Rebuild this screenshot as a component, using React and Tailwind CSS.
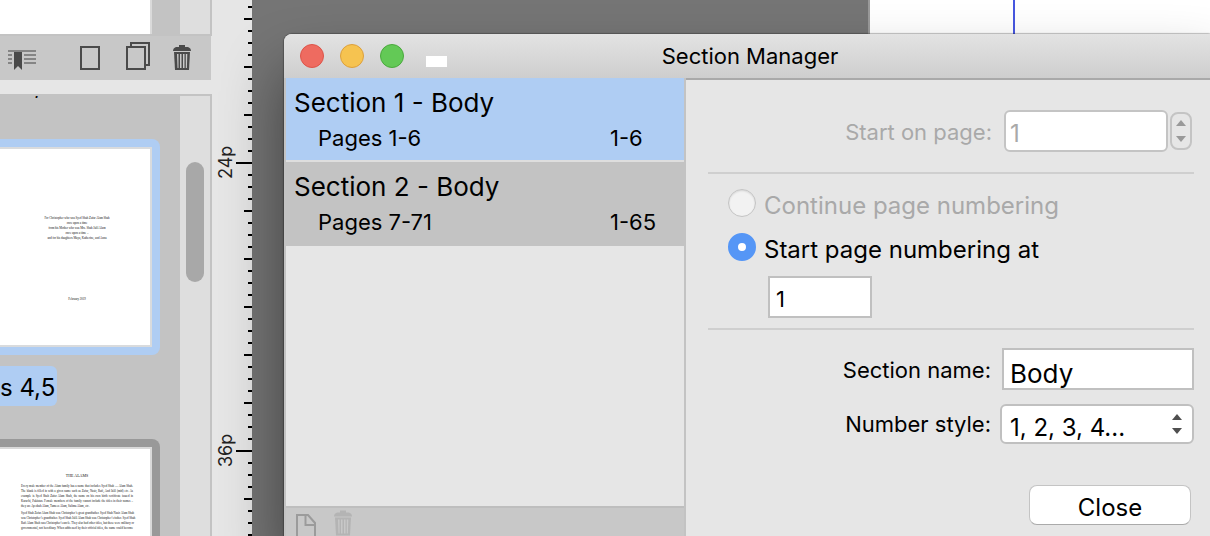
import React, { useState } from 'react';

const sections = [
  { id: 1, title: 'Section 1 - Body', pages: 'Pages 1-6', range: '1-6' },
  { id: 2, title: 'Section 2 - Body', pages: 'Pages 7-71', range: '1-65' },
];

const dedication = [
  'For Christopher who was Syed Shah Zafar Alam Shah',
  'once upon a time',
  'from his Mother who was Mrs. Shah Jalil Alam',
  'once upon a time –',
  'and for his daughters Maya, Katherine, and Anna',
];

const alamsText = [
  [
    'Every male member of the Alam family has a name that includes Syed Shah — Alam Shah.',
    'The blank is filled in with a given name such as Zafar, Nasir, Rafi, And Jalil (mid) etc. As',
    'example is Syed Shah Zafar Alam Shah, the name on his own birth certificate issued in',
    'Karachi, Pakistan. Female members of the family cannot include the titles in their names –',
    'they are Ayeshah Alam, Tameez Alam, Salima Alam, etc.',
  ],
  [
    'Syed Shah Zafar Alam Shah was Christopher’s great grandfather. Syed Shah Nasir Alam Shah',
    'was Christopher’s grandfather. Syed Shah Jalil Alam Shah was Christopher’s father. Syed Shah',
    'Rafi Alam Shah was Christopher’s uncle. They also had other titles, but these were military or',
    'governmental, not hereditary. When addressed by their official titles, the name could become',
  ],
];

const ticks = Array.from({ length: 45 }, (_, i) => 7 + i * 12);

const tickLength = (y) => {
  if ((y - 163) % 288 === 0) return 16;
  if ((y - 19) % 48 === 0) return 8;
  return 4;
};

const TrashIcon = ({ className, hole }) => (
  <svg viewBox="0 0 18 25" className={className} aria-hidden="true">
    <path d="M6 0h6v2h3q3 1 3 4H0q0-3 3-4h3z" fill="currentColor" />
    <path d="M1 7h16l-1 18H2z" fill="currentColor" />
    <path d="M4 9h1.500v14H4.500zM7 9h1.500v14H7zM10 9h1.500v14H10zM12.800 9h1.500l-.4 14h-1.100z" fill={hole} />
  </svg>
);

const ArrowUp = ({ className }) => (
  <svg viewBox="0 0 10 6" className={className} aria-hidden="true">
    <path d="M5 0l5 6H0z" fill="currentColor" />
  </svg>
);

const ArrowDown = ({ className }) => (
  <svg viewBox="0 0 10 6" className={className} aria-hidden="true">
    <path d="M0 0h10L5 6z" fill="currentColor" />
  </svg>
);

const PagesToolbar = () => (
  <div className="mr-px flex h-11 items-end bg-[#c8c8c8] pb-2.5 pl-2 text-[#4a4a4a]">
    <button type="button" aria-label="Sections">
      <svg viewBox="0 0 28 20" className="block h-5 w-7">
        <path d="M0 1h28M0 5h4M16 5h12M0 9h4M16 9h12M0 13h4M16 13h12" stroke="#858585" strokeWidth="2" />
        <path d="M6 2h8v18l-4-4-4 4z" fill="currentColor" />
      </svg>
    </button>
    <button type="button" aria-label="Add page" className="ml-11">
      <svg viewBox="0 0 20 24" className="block h-6 w-5">
        <rect x="1" y="1" width="18" height="22" fill="none" stroke="currentColor" strokeWidth="2" />
      </svg>
    </button>
    <button type="button" aria-label="Duplicate page" className="ml-[26px]">
      <svg viewBox="0 0 24 28" className="block h-7 w-6">
        <rect x="1" y="5" width="18" height="22" fill="none" stroke="currentColor" strokeWidth="2" />
        <path d="M5 4V1h18v22h-3" fill="none" stroke="currentColor" strokeWidth="2" />
      </svg>
    </button>
    <button type="button" aria-label="Delete page" className="ml-[23px]">
      <TrashIcon className="block h-[25px] w-[18px]" hole="#c8c8c8" />
    </button>
  </div>
);

const PagesPanel = () => (
  <aside className="flex w-[212px] shrink-0 flex-col bg-[#e6e6e6]">
    <div className="flex h-9 shrink-0 border-r-2 border-b-2 border-[#c3c3c3] bg-[#c3c3c3]">
      <div className="w-[152px] border-r-2 border-[#dadada] bg-white" />
      <div className="ml-auto w-[30px] bg-[#dedede]" />
    </div>
    <PagesToolbar />
    <div className="mt-3.5 flex min-h-0 flex-1 border-t-2 border-r-2 border-[#c3c3c3] bg-[#c3c3c3]">
      <div className="min-w-0 flex-1 overflow-hidden pr-5">
        {/* label of the spread scrolled out above */}
        <div className="flex h-2.5 items-end overflow-hidden">
          <span className="text-2xl leading-10">s 2,3</span>
        </div>
        <div className="mt-[33px] rounded-r-lg bg-[#afcdf3] py-2 pr-2">
          <div className="flex h-[200px] flex-col border-y-2 border-r-2 border-[#d9dbdd] bg-white pt-[67px] pl-1 text-center font-['Liberation_Serif'] text-[3px] leading-[5px] text-[#111]">
            {dedication.map((line, i) => (
              <p key={i}>{line}</p>
            ))}
            <p className="mt-14">February 2019</p>
          </div>
        </div>
        <div className="mt-[11px] h-10 w-[57px] rounded-r-md bg-[#afcdf3] pt-0.5">
          <span className="block text-2xl leading-10 whitespace-nowrap">s 4,5</span>
        </div>
        <div className="mt-[33px] rounded-tr-lg bg-[#999] pt-2 pr-2">
          <div className="h-24 border-t-2 border-r-2 border-[#d9d9d9] bg-white pt-6 pr-[17px] pl-[21px] font-['Liberation_Serif'] text-[3px] leading-[5px] text-[#111]">
            <p className="text-center text-[4px]">THE ALAMS</p>
            {alamsText.map((lines, i) => (
              <div key={i} className={i === 0 ? 'mt-1.5' : 'mt-0.5'}>
                {lines.map((line, j) => (
                  <p
                    key={j}
                    className={i === 0 && j === 4 ? 'whitespace-nowrap' : 'whitespace-nowrap [text-align-last:justify]'}
                  >
                    {line}
                  </p>
                ))}
              </div>
            ))}
          </div>
        </div>
      </div>
      <div className="flex w-[30px] justify-center bg-[#dedede] pt-[66px]">
        <div className="h-[120px] w-[18px] rounded-full bg-[#a8a8a8]" />
      </div>
    </div>
  </aside>
);

const Ruler = () => (
  <div className="w-10 shrink-0 bg-[#e6e6e6]">
    <svg viewBox="0 0 40 536" className="block h-[536px] w-10" aria-label="Ruler">
      {ticks.map((y) => (
        <path key={y} d={`M${40 - tickLength(y)} ${y}H40`} stroke="#000" strokeWidth="2" />
      ))}
      <text transform="translate(20 179) rotate(-90)" fontSize="18" fill="#222">
        24p
      </text>
      <text transform="translate(20 467) rotate(-90)" fontSize="18" fill="#222">
        36p
      </text>
    </svg>
  </div>
);

const SectionList = ({ selected, onSelect }) => (
  <div className="flex w-[402px] shrink-0 flex-col border-x-2 border-[#c3c3c3]">
    {sections.map((section) => (
      <button
        key={section.id}
        type="button"
        onClick={() => onSelect(section.id)}
        className={`h-[84px] border-b-2 pt-0.5 pl-2 text-left ${
          selected === section.id ? 'border-[#dedede] bg-[#afcdf3]' : 'border-[#c3c3c3] bg-[#c3c3c3]'
        }`}
      >
        <span className="block text-[26px] leading-9">{section.title}</span>
        <span className="flex pl-6 text-[22px] leading-[34px]">
          <span className="w-[292px]">{section.pages}</span>
          <span>{section.range}</span>
        </span>
      </button>
    ))}
    <div className="flex-1 bg-[#e6e6e6]" />
    <div className="flex h-[30px] gap-[18px] border-t-2 border-[#bebebe] bg-[#c8c8c8] pl-2.5">
      <button type="button" aria-label="New section" className="pt-1.5">
        <svg viewBox="0 0 20 24" className="block h-6 w-5 text-[#9b9b9b]">
          <path d="M1 1h11l7 8v14H1zM9.500 1v10H19" fill="none" stroke="currentColor" strokeWidth="2" />
        </svg>
      </button>
      <button type="button" aria-label="Delete section" disabled className="pt-0.5">
        <TrashIcon className="block h-[26px] w-[18px] text-[#b4b4b4]" hole="#c8c8c8" />
      </button>
    </div>
  </div>
);

const SectionSettings = () => {
  const [mode, setMode] = useState('start');

  return (
    <form className="min-w-0 flex-1 border-t-2 border-[#a9a9a9] bg-[#e6e6e6] pr-[22px] pl-[22px] text-[22px]">
      <div className="mt-[30px] flex items-center justify-end text-[#a9a9a9]">
        <label htmlFor="start-page" className="mr-3 pt-0.5">Start on page:</label>
        <input
          id="start-page"
          type="text"
          defaultValue="1"
          disabled
          className="h-[42px] w-[164px] rounded-md border-2 border-[#c4c4c4] bg-white px-1 pt-1 text-2xl"
        />
        <div className="mr-0.5 ml-0.5 flex h-[38px] w-[22px] flex-col items-center justify-center gap-2.5 rounded-lg border-2 border-[#c4c4c4] text-[#999]">
          <button type="button" aria-label="Increase" disabled>
            <ArrowUp className="block h-1.5 w-2.5" />
          </button>
          <button type="button" aria-label="Decrease" disabled>
            <ArrowDown className="block h-1.5 w-2.5" />
          </button>
        </div>
      </div>

      <hr className="mt-5 border-t-2 border-[#cfcfcf]" />

      <div className="mt-[15px] flex flex-col gap-4 pl-5 text-2xl leading-7">
        <label className="flex h-7 gap-2 text-[#a9a9a9]">
          <input
            type="radio"
            name="numbering"
            value="continue"
            disabled
            checked={mode === 'continue'}
            onChange={() => setMode('continue')}
            className="size-7 shrink-0 appearance-none rounded-full border border-[#c4c4c4] bg-[#f2f2f2] shadow-[inset_0_1px_2px_rgba(0,0,0,0.12)]"
          />
          <span className="pt-[3px]">Continue page numbering</span>
        </label>
        <label className="flex h-7 gap-2">
          <input
            type="radio"
            name="numbering"
            value="start"
            checked={mode === 'start'}
            onChange={() => setMode('start')}
            className="size-7 shrink-0 appearance-none rounded-full border-[10px] border-[#5596f6] bg-white"
          />
          <span className="pt-[3px]">Start page numbering at</span>
        </label>
      </div>
      <input
        type="text"
        aria-label="Start page numbering at"
        defaultValue="1"
        className="mt-[15px] ml-[60px] block h-[42px] w-[104px] border-2 border-[#c0c0c0] bg-white px-1.5 pt-1 text-[22px]"
      />

      <hr className="mt-2.5 border-t-2 border-[#cfcfcf]" />

      <div className="mt-[18px] flex items-center justify-end">
        <label htmlFor="section-name" className="mr-[11px] pt-0.5">Section name:</label>
        <input
          id="section-name"
          type="text"
          defaultValue="Body"
          className="h-[42px] w-48 border-2 border-[#c0c0c0] bg-white px-1.5 pt-2 text-[26px]"
        />
      </div>
      <div className="mt-3.5 flex items-center justify-end">
        <label htmlFor="number-style" className="mr-[9px]">Number style:</label>
        <div className="relative">
          <select
            id="number-style"
            className="block h-10 w-[194px] appearance-none rounded-md border-2 border-[#c0c0c0] bg-white px-2 pt-2 text-2xl leading-7"
          >
            <option>1, 2, 3, 4...</option>
            <option>i, ii, iii, iv...</option>
            <option>A, B, C, D...</option>
          </select>
          <div className="pointer-events-none absolute inset-y-0 right-3 flex flex-col justify-center gap-2 text-[#4f4f4f]">
            <ArrowUp className="h-1.5 w-2.5" />
            <ArrowDown className="h-1.5 w-2.5" />
          </div>
        </div>
      </div>
      <div className="mt-[41px] flex justify-end pr-[3px]">
        <button
          type="button"
          className="h-10 w-[162px] rounded-lg border border-[#c4c4c4] border-b-[#aaa] bg-white pt-1.5 text-2xl leading-7"
        >
          Close
        </button>
      </div>
    </form>
  );
};

const SectionManager = () => {
  const [selected, setSelected] = useState(1);

  return (
    <section
      role="dialog"
      aria-labelledby="manager-title"
      className="absolute top-[34px] -right-1.5 bottom-0 left-[284px] flex flex-col overflow-hidden rounded-t-lg bg-[#e6e6e6] shadow-[0_0_1px_1px_rgba(0,0,0,0.25),0_36px_60px_rgba(0,0,0,0.45)]"
    >
      <header className="grid h-11 shrink-0 grid-cols-[1fr_auto_1fr] items-center bg-linear-to-b from-[#e3e3e3] to-[#cecece] px-4">
        <div className="flex items-center gap-4">
          <button type="button" aria-label="Close window" className="size-6 rounded-full border border-[#dd5449] bg-[#ee6b60]" />
          <button type="button" aria-label="Minimize window" className="size-6 rounded-full border border-[#dda03c] bg-[#f6c350]" />
          <button type="button" aria-label="Zoom window" className="size-6 rounded-full border border-[#4aa93d] bg-[#63c956]" />
          <div className="mt-2.5 ml-1.5 h-[11px] w-[21px] bg-white" />
        </div>
        <h1 id="manager-title" className="text-[22px]">Section Manager</h1>
      </header>
      <div className="flex min-h-0 flex-1">
        <SectionList selected={selected} onSelect={setSelected} />
        <SectionSettings />
      </div>
    </section>
  );
};

const App = () => (
  <main className="relative flex h-screen overflow-hidden font-['Inter',sans-serif] text-black">
    <PagesPanel />
    <Ruler />
    <div className="flex min-w-0 flex-1 justify-end bg-[#757575]">
      <div className="flex w-[342px] border-l-2 border-[#9a9a9a] bg-white">
        <div className="ml-[143px] w-0.5 bg-[#4757e0]" />
      </div>
    </div>
    <SectionManager />
  </main>
);

export default App;
